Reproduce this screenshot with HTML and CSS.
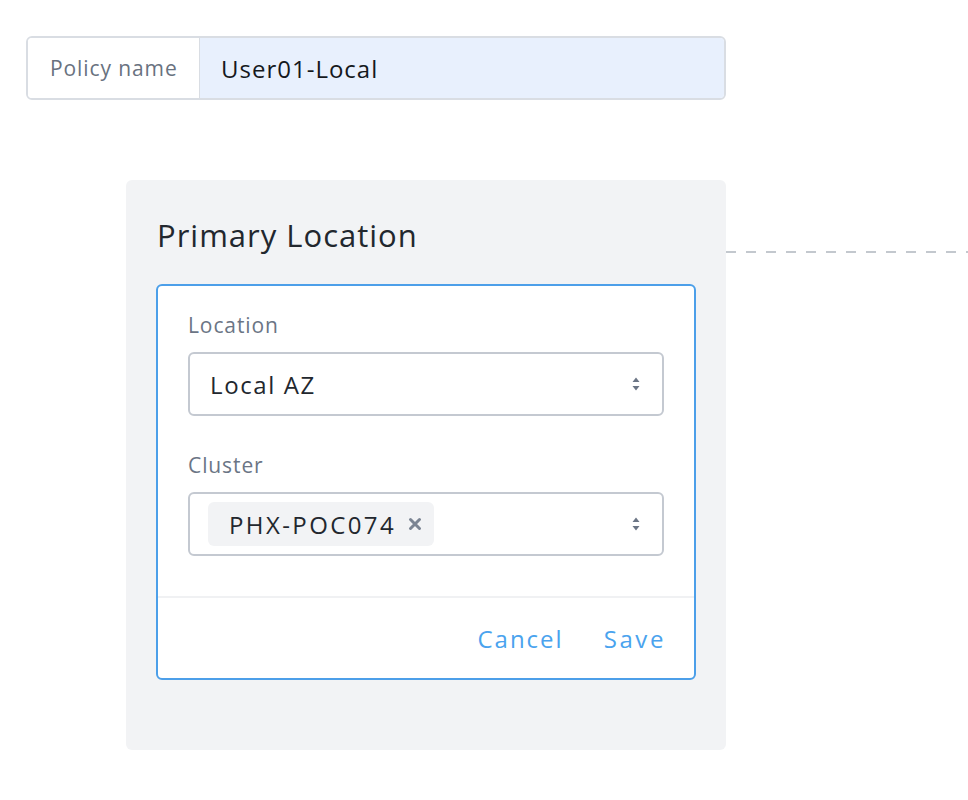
FILE: index.html
```html
<!DOCTYPE html>
<html>
<head>
<meta charset="utf-8">
<link rel="stylesheet" href="styles.css">
</head>
<body>
<div class="page">
  <div class="policy">
    <div class="policy-label">Policy name</div>
    <div class="policy-value">User01-Local</div>
  </div>
  <div class="row">
    <div class="panel">
      <div class="panel-title">Primary Location</div>
      <div class="card">
        <div class="card-body">
          <div class="field-label">Location</div>
          <div class="select">
            <span class="select-text">Local AZ</span>
            <svg class="spin" width="8" height="14" viewBox="0 0 8 14"><path d="M4 0.5 L7.5 5 H0.5 Z M4 13.5 L7.5 9 H0.5 Z" fill="#6b7585"/></svg>
          </div>
          <div class="field-label second">Cluster</div>
          <div class="select tags">
            <span class="tag">PHX-POC074<svg class="x" width="14" height="14" viewBox="0 0 14 14"><path d="M2.5 2.5 L11.5 11.5 M11.5 2.5 L2.5 11.5" stroke="#7b8493" stroke-width="3" stroke-linecap="round"/></svg></span>
            <svg class="spin" width="8" height="14" viewBox="0 0 8 14"><path d="M4 0.5 L7.5 5 H0.5 Z M4 13.5 L7.5 9 H0.5 Z" fill="#6b7585"/></svg>
          </div>
        </div>
        <div class="card-footer">
          <span class="btn">Cancel</span>
          <span class="btn">Save</span>
        </div>
      </div>
    </div>
    <div class="dash"></div>
  </div>
</div>
</body>
</html>
```
FILE: styles.css
```css
html, body {
  margin: 0;
  padding: 0;
  background: #ffffff;
}
body {
  font-family: "Open Sans", Lato, sans-serif;
  color: #22272e;
}
.page {
  padding-top: 36px;
  width: 968px;
  height: 800px;
  overflow: hidden;
  box-sizing: border-box;
}
.policy {
  margin-left: 26px;
  width: 700px;
  height: 64px;
  box-sizing: border-box;
  border: 2px solid #d9dde3;
  border-radius: 6px;
  display: flex;
  overflow: hidden;
}
.policy-label {
  width: 172px;
  border-right: 1px solid #d9dde3;
  background: #ffffff;
  display: flex;
  align-items: center;
  padding-left: 22px;
  box-sizing: border-box;
  font-size: 21px;
  letter-spacing: 0.9px;
  color: #69727f;
}
.policy-value {
  flex: 1;
  background: #e8f0fd;
  display: flex;
  align-items: center;
  padding-left: 21px;
  font-size: 24px;
  letter-spacing: 1px;
  color: #15181c;
}
.row {
  display: flex;
  margin-top: 80px;
  margin-left: 126px;
}
.panel {
  width: 600px;
  height: 570px;
  background: #f2f3f5;
  border-radius: 6px;
  padding: 35px 30px 0;
  box-sizing: border-box;
}
.panel-title {
  font-size: 31px;
  line-height: 40px;
  letter-spacing: 1px;
  margin-left: 1px;
  margin-bottom: 29px;
  color: #22272e;
}
.card {
  background: #ffffff;
  border: 2px solid #4c9fe9;
  border-radius: 6px;
  height: 396px;
  box-sizing: border-box;
}
.card-body {
  padding: 27px 30px 40px;
  border-bottom: 2px solid #f0f1f3;
}
.field-label {
  font-size: 21px;
  line-height: 24px;
  letter-spacing: 0.9px;
  color: #6b7585;
  margin-bottom: 15px;
}
.field-label.second {
  margin-top: 37px;
}
.select {
  height: 64px;
  box-sizing: border-box;
  border: 2px solid #c4c9d1;
  border-radius: 6px;
  display: flex;
  align-items: center;
  justify-content: space-between;
  padding: 0 22px 0 20px;
}
.select.tags {
  padding-left: 18px;
}
.select-text {
  font-size: 24px;
  letter-spacing: 1.6px;
  color: #22272e;
}
.tag {
  height: 44px;
  background: #f2f3f5;
  border-radius: 6px;
  display: flex;
  align-items: center;
  padding: 0 12px 0 21px;
  font-size: 24px;
  letter-spacing: 2.4px;
  color: #22272e;
}
.x {
  margin-left: 12px;
}
.card-footer {
  height: 81px;
  display: flex;
  align-items: center;
  justify-content: flex-end;
  padding-right: 30px;
  gap: 40px;
}
.btn {
  font-size: 24px;
  letter-spacing: 2px;
  color: #4aa3ee;
}
.btn:last-child {
  letter-spacing: 2.6px;
  margin-right: -2px;
}
.dash {
  margin-top: 71px;
  flex: 1;
  height: 2px;
  background-image: linear-gradient(to right, #c3c8ce 0 10px, transparent 10px 20px);
  background-size: 20px 2px;
}
```
